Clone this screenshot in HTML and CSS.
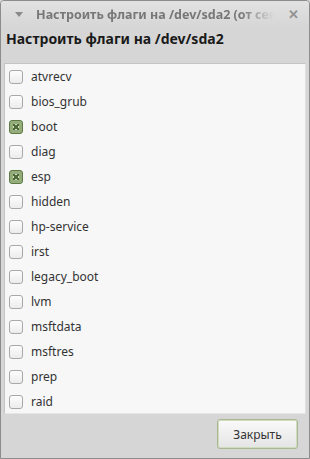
FILE: index.html
```html
<!DOCTYPE html>
<html lang="ru">
<head>
  <meta charset="UTF-8" />
  <title>Настроить флаги на /dev/sda2</title>
  <link rel="stylesheet" href="styles.css">
</head>
<body>
  <div class="window">
    <div class="titlebar">
      <span class="menu-arrow"></span>
      <div class="title">Настроить флаги на /dev/sda2 (от сектора 2048)</div>
      <span class="close">✕</span>
    </div>
    <div class="content">
      <h3>Настроить флаги на /dev/sda2</h3>
      <div class="list">
        <label class="row"><span class="check"></span>atvrecv</label>
        <label class="row"><span class="check"></span>bios_grub</label>
        <label class="row"><span class="check on"></span>boot</label>
        <label class="row"><span class="check"></span>diag</label>
        <label class="row"><span class="check on"></span>esp</label>
        <label class="row"><span class="check"></span>hidden</label>
        <label class="row"><span class="check"></span>hp-service</label>
        <label class="row"><span class="check"></span>irst</label>
        <label class="row"><span class="check"></span>legacy_boot</label>
        <label class="row"><span class="check"></span>lvm</label>
        <label class="row"><span class="check"></span>msftdata</label>
        <label class="row"><span class="check"></span>msftres</label>
        <label class="row"><span class="check"></span>prep</label>
        <label class="row"><span class="check"></span>raid</label>
      </div>
      <div class="actions">
        <button>Закрыть</button>
      </div>
    </div>
  </div>
</body>
</html>
```

FILE: styles.css
```css
html, body {
  margin: 0;
  padding: 0;
}
body {
  font-family: 'Noto Sans', sans-serif;
  background: #d6d6d6;
}
.window {
  width: 310px;
  height: 459px;
  box-sizing: border-box;
  border: 1px solid #8c8c8c;
  border-radius: 4px 4px 0 0;
  background: #d6d6d6;
  overflow: hidden;
}
.titlebar {
  height: 26px;
  display: flex;
  align-items: center;
  background: linear-gradient(#e2e2e2, #d6d6d6);
  padding: 0 10px 0 14px;
}
.menu-arrow {
  width: 0;
  height: 0;
  border-left: 4px solid transparent;
  border-right: 4px solid transparent;
  border-top: 5px solid #8a8a8a;
  margin-right: 13px;
  margin-top: 1px;
}
.title {
  flex: 1;
  white-space: nowrap;
  overflow: hidden;
  font-size: 12.5px;
  font-weight: bold;
  color: #777;
  -webkit-mask-image: linear-gradient(to right, #000 86%, transparent 100%);
}
.close {
  color: #939393;
  font-size: 13px;
  font-weight: bold;
  margin-left: 14px;
}
.content {
  padding: 0 3px;
}
h3 {
  margin: 0;
  padding: 2px 2px 0;
  height: 34px;
  font-size: 14px;
  font-weight: bold;
  color: #1a1a1a;
}
.list {
  background: #f7f7f7;
  border: 1px solid #c4c4c4;
  border-right-color: #e0e0e0;
  border-bottom-color: #e6e6e6;
  height: 351px;
  box-sizing: border-box;
}
.row {
  display: flex;
  align-items: center;
  height: 25px;
  padding-left: 4px;
  font-size: 12px;
  color: #333;
}
.check {
  width: 12px;
  height: 12px;
  border: 1px solid #a8a8a8;
  border-radius: 3px;
  background: linear-gradient(#fdfdfd, #ececec);
  margin-right: 8px;
}
.check.on {
  border-color: #5d7a44;
  background: #95ad7a;
  position: relative;
}
.check.on::after {
  content: "";
  position: absolute;
  left: 3px;
  top: 3px;
  width: 6px;
  height: 6px;
  background:
    linear-gradient(45deg, transparent 40%, #4f6b38 40%, #4f6b38 60%, transparent 60%),
    linear-gradient(-45deg, transparent 40%, #4f6b38 40%, #4f6b38 60%, transparent 60%),
    #d3e2c2;
}
.actions {
  display: flex;
  justify-content: flex-end;
  padding: 5px 8px 0 0;
}
button {
  width: 81px;
  height: 30px;
  font-family: 'Noto Sans', sans-serif;
  font-size: 12px;
  color: #333;
  border: 1px solid #a9b893;
  border-radius: 3px;
  background: linear-gradient(#fafafa, #e4e4e4);
  box-shadow: 0 0 0 1px #d0dcc0 inset;
}
```
